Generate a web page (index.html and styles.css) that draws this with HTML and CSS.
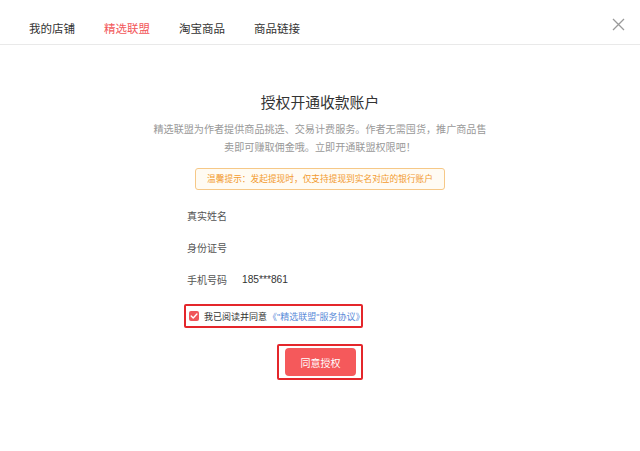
FILE: index.html
```html
<!DOCTYPE html>
<html lang="zh-CN">
<head>
<meta charset="utf-8">
<title>授权开通收款账户</title>
<link rel="stylesheet" href="styles.css">
</head>
<body>
<div class="dialog">
  <header class="tabs-bar">
    <nav class="tabs">
      <span class="tab">我的店铺</span>
      <span class="tab active">精选联盟</span>
      <span class="tab">淘宝商品</span>
      <span class="tab">商品链接</span>
    </nav>
    <span class="close" aria-label="关闭">
      <svg width="13" height="13" viewBox="0 0 13 13"><path d="M1 1L12 12M12 1L1 12" stroke="#9a9a9a" stroke-width="1.3" fill="none"/></svg>
    </span>
  </header>
  <main class="content">
    <h1 class="title">授权开通收款账户</h1>
    <p class="desc">精选联盟为作者提供商品挑选、交易计费服务。作者无需囤货，推广商品售<br>卖即可赚取佣金哦。立即开通联盟权限吧！</p>
    <div class="notice">温馨提示：发起提现时，仅支持提现到实名对应的银行账户</div>
    <div class="form">
      <div class="row"><span class="label">真实姓名</span><span class="value"></span></div>
      <div class="row"><span class="label">身份证号</span><span class="value"></span></div>
      <div class="row"><span class="label">手机号码</span><span class="value">185***861</span></div>
      <label class="agree mark">
        <span class="checkbox">
          <svg width="10" height="10" viewBox="0 0 10 10"><path d="M2.2 5.1L4.2 7L7.9 3.1" stroke="#fff" stroke-width="1.4" fill="none" stroke-linecap="round" stroke-linejoin="round"/></svg>
        </span>
        <span class="agree-text">我已阅读并同意</span><span class="link">《"精选联盟"服务协议》</span>
      </label>
    </div>
    <div class="btn-wrap mark">
      <button class="btn">同意授权</button>
    </div>
  </main>
</div>
</body>
</html>
```

FILE: styles.css
```css
* { box-sizing: border-box; }
html, body {
  margin: 0;
  padding: 0;
  background: #fff;
}
body {
  width: 640px;
  height: 451px;
  overflow: hidden;
  font-family: "Liberation Sans", "Noto Sans CJK SC", sans-serif;
  color: #333;
}
.dialog {
  display: flex;
  flex-direction: column;
  height: 100%;
}
.tabs-bar {
  display: flex;
  justify-content: space-between;
  align-items: flex-start;
  height: 45px;
  border-bottom: 1px solid #e9e9e9;
}
.tabs {
  display: flex;
  gap: 29px;
  padding-left: 29px;
  padding-top: 21px;
}
.tab {
  font-size: 11.5px;
  line-height: 16px;
  color: #333;
}
.tab.active { color: #f2575a; }
.close {
  display: flex;
  margin-top: 18px;
  margin-right: 15px;
}
.content {
  display: flex;
  flex-direction: column;
  align-items: center;
}
.title {
  margin: 48px 0 0;
  font-size: 14.8px;
  line-height: 20px;
  font-weight: normal;
  color: #333;
}
.desc {
  margin: 8px 0 0;
  font-size: 10.1px;
  line-height: 18px;
  color: #999;
  text-align: center;
  white-space: nowrap;
}
.notice {
  margin-top: 11px;
  height: 22px;
  padding: 0 11px;
  border: 1px solid #f6c887;
  border-radius: 3px;
  background: #fffbf3;
  color: #f29a2e;
  font-size: 8.7px;
  line-height: 20px;
  white-space: nowrap;
}
.form {
  width: 268px;
  margin-top: 9px;
  margin-left: 2px;
  display: flex;
  flex-direction: column;
}
.row {
  display: flex;
  align-items: center;
  height: 32px;
  font-size: 10px;
}
.label {
  width: 55px;
  color: #555;
}
.value {
  color: #333;
  font-size: 10.2px;
}
.mark {
  border: 2px solid #e4262b;
  border-radius: 2px;
}
.agree {
  align-self: flex-start;
  display: flex;
  align-items: center;
  margin-top: 9px;
  margin-left: -3px;
  width: 179px;
  height: 24px;
  padding-left: 3px;
  font-size: 9px;
  white-space: nowrap;
}
.checkbox {
  display: flex;
  align-items: center;
  justify-content: center;
  width: 10px;
  height: 10px;
  border-radius: 2px;
  background: #f0565a;
  margin-right: 5px;
}
.agree-text { color: #333; }
.link { color: #5b8bd8; margin-left: 1px; }
.btn-wrap {
  margin-top: 16px;
  padding: 2px 5px 2px 6px;
  display: flex;
}
.btn {
  width: 71px;
  height: 28px;
  border: none;
  border-radius: 4px;
  background: #f5595b;
  color: #fff;
  font-family: "Liberation Sans", "Noto Sans CJK SC", sans-serif;
  font-size: 10px;
  padding: 0;
}
```
